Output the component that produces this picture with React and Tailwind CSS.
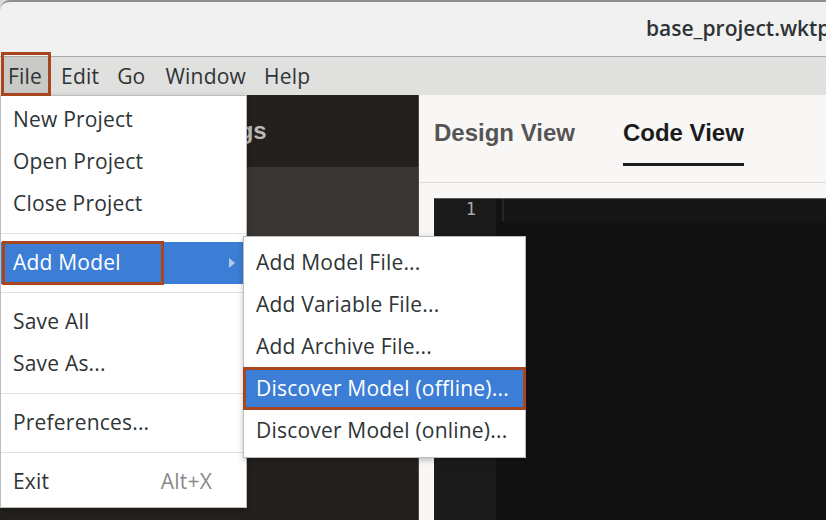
import React from "react";

const menuFont = { fontFamily: '"Open Sans", "Noto Sans", sans-serif' };

function Item({ children, active, right, arrow }) {
  return (
    <div
      className={`h-[42px] flex items-center pl-[12px] pr-[12px] text-[21px] tracking-[0.2px] ${
        active ? "bg-[#3c7ed5] text-white" : "text-[#2e3436]"
      }`}
    >
      <span className="flex-1 whitespace-nowrap">{children}</span>
      {right && <span className="text-[#8a8a8a] mr-[22px]">{right}</span>}
      {arrow && (
        <svg width="8" height="12" viewBox="0 0 8 12" className="mr-[-2px]">
          <path d="M1 1 L7 6 L1 11 Z" fill="#b9c9e3" />
        </svg>
      )}
    </div>
  );
}

function Sep() {
  return (
    <div className="h-[17px] flex items-center">
      <div className="h-px w-full bg-[#e2e2e2]" />
    </div>
  );
}

export default function App() {
  return (
    <div
      className="w-[826px] h-[520px] overflow-hidden relative bg-[#d9d9d9]"
      style={menuFont}
    >
      {/* Title bar */}
      <div className="h-[57px] bg-[#f1f1f1] border-t-2 border-[#8f8f8f] rounded-tl-[10px] border-b border-b-[#a9a9a9] flex items-center overflow-hidden">
        <span className="pl-[646px] text-[21px] font-semibold text-[#2e3436] whitespace-nowrap">
          base_project.wktp
        </span>
      </div>
      {/* Menu bar */}
      <div className="h-[38px] bg-[#e0e0df] flex items-stretch text-[21px] tracking-[0.2px] text-[#2e3436]">
        <span className="flex items-center pt-[2px] px-[7px] bg-[#c9c9c6] ml-[1px]">File</span>
        <span className="flex items-center pt-[2px] ml-[12px]">Edit</span>
        <span className="flex items-center pt-[2px] ml-[18px]">Go</span>
        <span className="flex items-center pt-[2px] ml-[20px]">Window</span>
        <span className="flex items-center pt-[2px] ml-[18px]">Help</span>
      </div>
      {/* Main */}
      <div className="flex h-[425px]">
        <div className="w-[419px] flex flex-col border-r border-[#4d4946]">
          <div className="h-[72px] bg-[#23201d] flex items-center">
            <span
              className="pl-[172px] text-[24px] font-bold text-[#b9b9b9] whitespace-nowrap"
              style={{ fontFamily: '"Liberation Sans", Arial, sans-serif' }}
            >
              Settings
            </span>
          </div>
          <div className="h-[290px] bg-[#393633]" />
          <div className="flex-1 bg-[#23201d]" />
        </div>
        <div className="flex-1 bg-[#f9f7f6] flex flex-col">
          <div
            className="h-[88px] border-b border-[#dedcdb] flex items-start pt-[20px] pl-[15px] text-[24px] font-bold"
            style={{ fontFamily: '"Liberation Sans", Arial, sans-serif' }}
          >
            <span className="text-[#555555]">Design View</span>
            <div className="ml-[48px] relative">
              <span className="text-[#1c1c1c]">Code View</span>
              <div className="absolute left-0 right-0 top-[48px] h-[3px] bg-[#1c1c1c]" />
            </div>
          </div>
          <div className="flex-1 pl-[15px] pt-[15px]">
            <div className="h-full bg-[#121212] border-t border-[#5a5a5a] flex">
              <div className="w-[62px] bg-[#1a1a1a] flex flex-col">
                <div
                  className="h-[22px] flex items-center justify-end pr-[20px] text-[17px] text-[#a9a9a9]"
                  style={{ fontFamily: '"DejaVu Sans Mono", monospace' }}
                >
                  1
                </div>
              </div>
              <div className="flex-1 flex flex-col">
                <div className="h-[22px] bg-[#161616] border-l-2 border-[#262626] ml-[6px]" />
              </div>
            </div>
          </div>
        </div>
      </div>

      {/* File menu */}
      <div className="absolute left-0 top-[95px] w-[247px] h-[413px] bg-white border border-[#bdbdbd] shadow-[0_2px_6px_rgba(0,0,0,0.25)] pt-[3px]">
        <Item>New Project</Item>
        <Item>Open Project</Item>
        <Item>Close Project</Item>
        <Sep />
        <Item active arrow>Add Model</Item>
        <Sep />
        <Item>Save All</Item>
        <Item>Save As...</Item>
        <Sep />
        <Item>Preferences...</Item>
        <Sep />
        <Item right="Alt+X">Exit</Item>
      </div>

      {/* Submenu */}
      <div className="absolute left-[243px] top-[236px] w-[283px] h-[222px] bg-white border border-[#bdbdbd] shadow-[0_2px_6px_rgba(0,0,0,0.25)] pt-[5px]">
        <Item>Add Model File...</Item>
        <Item>Add Variable File...</Item>
        <Item>Add Archive File...</Item>
        <Item active>Discover Model (offline)...</Item>
        <Item>Discover Model (online)...</Item>
      </div>

      {/* Annotation boxes */}
      <div className="absolute left-[1px] top-[52px] w-[50px] h-[44px] border-[3px] border-[#a8471f]" />
      <div className="absolute left-[2px] top-[241px] w-[162px] h-[44px] border-[3px] border-[#a8471f]" />
      <div className="absolute left-[243px] top-[367px] w-[283px] h-[43px] border-[3px] border-[#a8471f]" />
    </div>
  );
}
